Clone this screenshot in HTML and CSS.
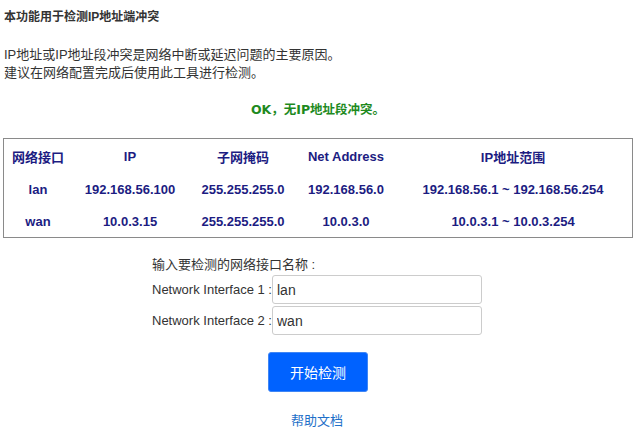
FILE: index.html
```html
<!DOCTYPE html>
<html lang="zh">
<head>
<meta charset="utf-8">
<link rel="stylesheet" href="styles.css">
</head>
<body>
<div class="page">
  <h1 class="title">本功能用于检测IP地址端冲突</h1>
  <p class="desc">IP地址或IP地址段冲突是网络中断或延迟问题的主要原因。<br>建议在网络配置完成后使用此工具进行检测。</p>
  <p class="status">OK，无IP地址段冲突。</p>
  <div class="table-box">
    <table class="result">
      <colgroup>
        <col class="c1"><col class="c2"><col class="c3"><col class="c4"><col class="c5">
      </colgroup>
      <tr class="head"><th>网络接口</th><th>IP</th><th>子网掩码</th><th>Net Address</th><th>IP地址范围</th></tr>
      <tr><td>lan</td><td>192.168.56.100</td><td>255.255.255.0</td><td>192.168.56.0</td><td>192.168.56.1 ~ 192.168.56.254</td></tr>
      <tr><td>wan</td><td>10.0.3.15</td><td>255.255.255.0</td><td>10.0.3.0</td><td>10.0.3.1 ~ 10.0.3.254</td></tr>
    </table>
  </div>
  <form class="form">
    <div class="form-title">输入要检测的网络接口名称 :</div>
    <div class="row"><label class="lbl">Network Interface 1 :</label><input class="inp" type="text" value="lan"></div>
    <div class="row"><label class="lbl">Network Interface 2 :</label><input class="inp" type="text" value="wan"></div>
    <div class="actions"><button class="btn" type="button">开始检测</button></div>
    <div class="help"><a class="help-link" href="#">帮助文档</a></div>
  </form>
</div>
</body>
</html>
```
FILE: styles.css
```css
html, body {
  margin: 0;
  padding: 0;
  background: #fff;
}
body {
  font-family: "Liberation Sans", Arial, "Noto Sans CJK SC", sans-serif;
  color: #333;
  font-size: 13px;
}
.page {
  padding: 8px 4px 0 4px;
}
.title {
  margin: 0;
  font-size: 12px;
  font-weight: bold;
  line-height: 18px;
  color: #333;
}
.desc {
  margin: 20px 0 0 0;
  font-size: 13px;
  line-height: 18px;
  color: #333;
}
.status {
  margin: 19px 0 0 0;
  text-align: center;
  font-family: "DejaVu Sans", Verdana, "Noto Sans CJK SC", sans-serif;
  font-weight: bold;
  font-size: 12.5px;
  line-height: 18px;
  color: #1e8a1e;
}
.table-box {
  margin: 19px -1px 0 -1px;
  border: 1px solid #8a8a8a;
}
.result {
  width: 100%;
  border-collapse: collapse;
  table-layout: fixed;
  color: #1c1c82;
  font-weight: bold;
  font-size: 13px;
}
.c1 { width: 68px; }
.c2 { width: 116px; }
.c3 { width: 110px; }
.c4 { width: 96px; }
.result th, .result td {
  text-align: center;
  padding: 0;
  height: 32px;
  white-space: nowrap;
}
.result .head th {
  height: 34px;
}
.form {
  width: 332px;
  margin: 18px auto 0 auto;
  padding-left: 0;
}
.form-title {
  font-size: 13px;
  line-height: 18px;
  color: #333;
}
.row {
  display: flex;
  align-items: center;
  margin-top: 1px;
}
.row + .row {
  margin-top: 2px;
}
.lbl {
  width: 120px;
  flex: none;
  font-size: 13px;
  color: #333;
}
.inp {
  box-sizing: border-box;
  width: 210px;
  height: 29px;
  border: 1px solid #ccc;
  border-radius: 3px;
  padding: 0 4px;
  font-family: "Liberation Sans", Arial, sans-serif;
  font-size: 14px;
  color: #333;
  margin: 0;
}
.actions {
  display: flex;
  justify-content: flex-start;
  padding-left: 116px;
  margin-top: 17px;
}
.btn {
  width: 100px;
  height: 40px;
  background: #0062ff;
  border: 1px solid #3f86f5;
  border-radius: 3px;
  color: #fff;
  font-family: "Noto Sans CJK SC", sans-serif;
  font-size: 14px;
  padding: 0;
}
.help {
  margin-top: 18px;
  padding-left: 139px;
  font-size: 13px;
}
.help-link {
  color: #1e6fc8;
  text-decoration: none;
  font-family: "Noto Sans CJK SC", sans-serif;
}
```
